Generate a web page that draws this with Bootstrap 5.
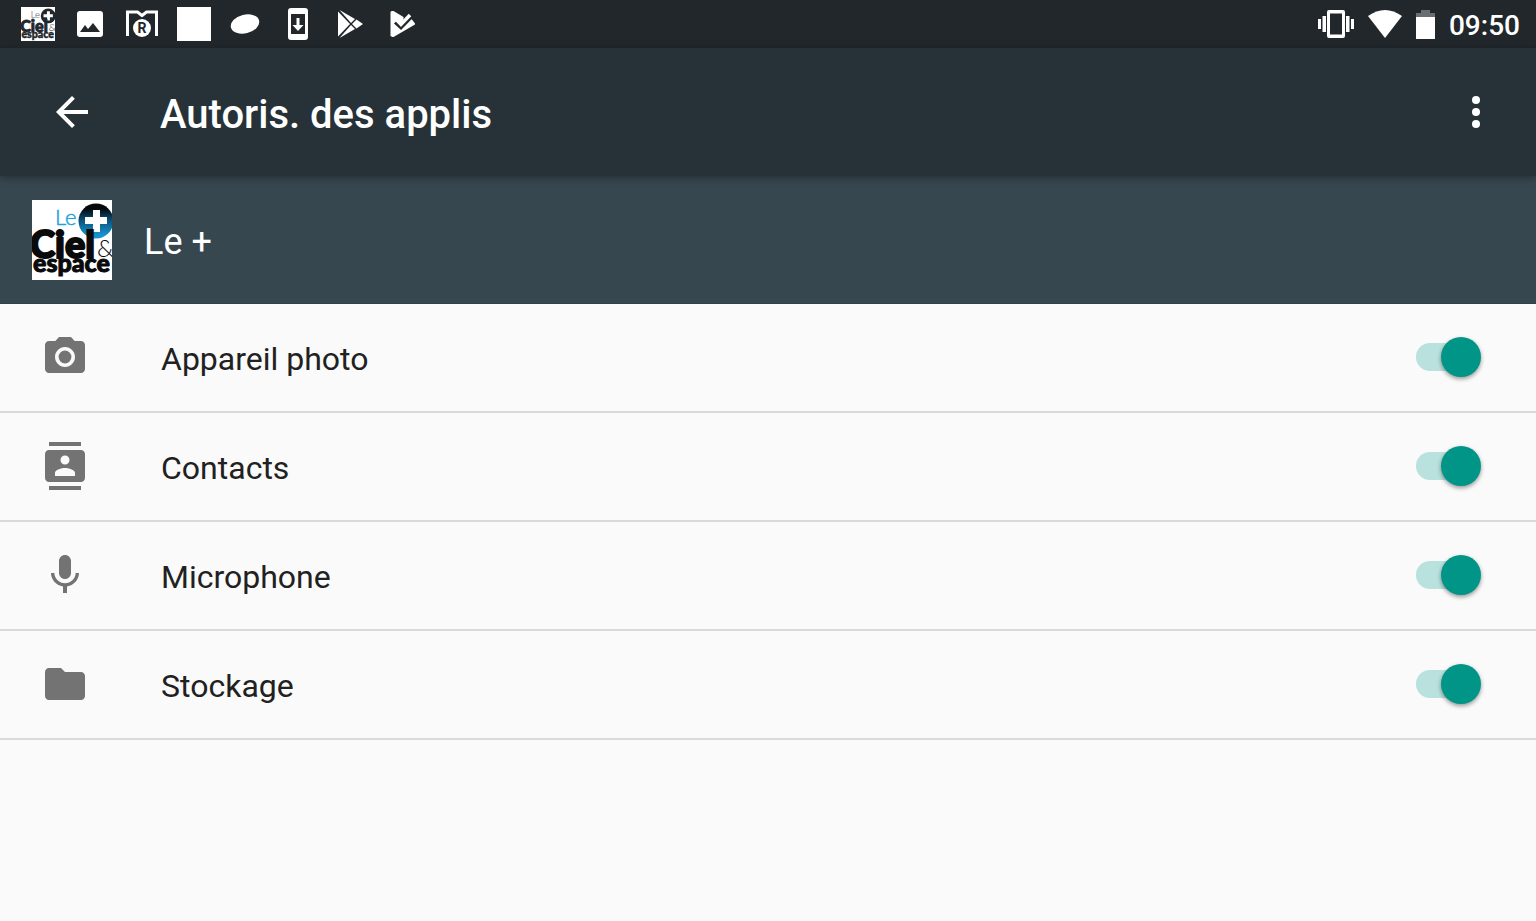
<!DOCTYPE html>
<html lang="fr">
<head>
<meta charset="utf-8">
<meta name="viewport" content="width=device-width, initial-scale=1">
<title>Autoris. des applis</title>
<link rel="stylesheet" href="https://cdn.jsdelivr.net/npm/bootstrap@5.3.0/dist/css/bootstrap.min.css">
<style>
  body { font-family: Roboto, "Noto Sans", sans-serif; background: #fafafa; color: #212121; }
  svg { display: block; flex: none; }
  .status-bar { height: 48px; background: #21272b; padding: 0 16px 0 21px; }
  .status-icons { gap: 18px; }
  .status-system { gap: 14px; }
  .status-time { font-size: 28px; font-weight: 500; line-height: 32px; padding-top: 3px; }
  .app-bar { height: 128px; background: #263238; padding: 0 36px 0 48px; box-shadow: 0 2px 8px rgba(0,0,0,.35); z-index: 1; }
  .app-title { font-size: 40px; font-weight: 500; line-height: 48px; margin-left: 64px; padding-top: 6px; }
  .icon-btn { width: 48px; height: 48px; }
  .app-info { height: 128px; background: #37474f; padding: 0 32px; gap: 32px; border-bottom: 1px solid #324148; }
  .app-name { font-size: 36px; line-height: 44px; padding-top: 5px; }
  .perm { height: 109px; padding: 0 55px 2px 41px; border-bottom: 2px solid #dadada; }
  .perm svg { color: #737373; }
  .perm label { font-size: 32px; line-height: 40px; margin-left: 72px; padding-top: 4px; }
  .toggle { appearance: none; width: 65px; height: 40px; margin: 0; position: relative; cursor: pointer; }
  .toggle::before { content: ""; position: absolute; inset: 6px 8px 6px 0; border-radius: 14px; background: #b9e1dd; }
  .toggle::after { content: ""; position: absolute; right: 0; top: 0; width: 40px; height: 40px; border-radius: 50%; background: #009587; box-shadow: 0 2px 4px rgba(0,0,0,.4); }
  .toggle:not(:checked)::before { background: #b9b9b9; }
  .toggle:not(:checked)::after { right: auto; left: 0; background: #f1f1f1; }
  .logo { --ink: #0a0a0a; --le: #1ba3dc; --disc: url(#discBlue); }
  .logo-mono { --ink: #21272b; --le: #8a8d90; --disc: #21272b; }
  .logo-word { font-family: Lato, sans-serif; font-weight: 900; fill: var(--ink); stroke: var(--ink); }
  .logo-thin { font-family: Lato, sans-serif; font-weight: 300; }
  .logo-le { fill: var(--le); stroke: var(--le); }
</style>
</head>
<body>

<svg width="0" height="0" class="position-absolute" aria-hidden="true">
  <defs>
    <linearGradient id="discBlue" x1="0" y1="0" x2="0" y2="1">
      <stop offset=".15" stop-color="#04090d"/><stop offset=".5" stop-color="#0b5580"/><stop offset=".9" stop-color="#1593cf"/>
    </linearGradient>
    <symbol id="brand" viewBox="0 0 80 80">
      <rect width="80" height="80" fill="#fff"/>
      <text class="logo-thin logo-le" x="23" y="25" font-size="22" stroke-width=".5">Le</text>
      <circle cx="64" cy="21" r="17.5" fill="var(--disc)"/>
      <path d="M61 10h7v7h7v7h-7v8h-7v-8h-8v-7h8z" fill="#fff"/>
      <text class="logo-word" x="-2" y="58" font-size="38" stroke-width="2">Ciel</text>
      <text class="logo-thin" x="65" y="57" font-size="24" fill="var(--ink)">&amp;</text>
      <text class="logo-word" x="1" y="72" font-size="25" stroke-width="1">espace</text>
    </symbol>
  </defs>
</svg>

<div class="status-bar d-flex align-items-center justify-content-between text-white">
  <div class="status-icons d-flex align-items-center">
    <svg class="logo-mono" width="34" height="34"><use href="#brand"/></svg>
    <svg width="34" height="34" fill="currentColor"><path fill-rule="evenodd" d="M7 4h20a3 3 0 0 1 3 3v20a3 3 0 0 1-3 3H7a3 3 0 0 1-3-3V7a3 3 0 0 1 3-3zM7 25h20l-7-9-5 6-3-4z"/></svg>
    <svg width="34" height="34"><path d="M2.500 29V5h10L17 8.500 21.500 5h10v24" fill="none" stroke="currentColor" stroke-width="3"/><circle cx="17" cy="21" r="10.500" fill="#21272b"/><circle cx="17" cy="21" r="9" fill="currentColor"/><text x="17" y="26" text-anchor="middle" font-size="14" font-weight="700" fill="#21272b">R</text></svg>
    <svg width="34" height="34"><rect width="34" height="34" fill="currentColor"/></svg>
    <svg width="34" height="34"><ellipse cx="16" cy="17" rx="14.500" ry="9.300" transform="rotate(-14 16 17)" fill="currentColor"/></svg>
    <svg width="34" height="34" fill="currentColor"><path fill-rule="evenodd" d="M10 1h14a3 3 0 0 1 3 3v26a3 3 0 0 1-3 3H10a3 3 0 0 1-3-3V4a3 3 0 0 1 3-3zM10 7v20h14V7z"/><path d="M15.500 11h3v7h4L17 24l-5.500-6h4z"/></svg>
    <svg width="34" height="34" fill="currentColor"><path d="M5 4.500 17 17 5 29.500zM6.500 3 22 12l-4 4zM6.500 31 22 22l-4-4zM23.500 12.500 30 17l-6.500 4.500L19 17z"/></svg>
    <svg width="34" height="34"><path d="M6.500 4h2l10 6v10l8-8 3.500 4.500v1L8.500 30h-1L5.500 29V5z" fill="currentColor"/><path d="m10 15.500 6 5.500 11-11.500" fill="none" stroke="#21272b" stroke-width="3"/><path d="m10.500 11.500 5.500 6 9-9.500" fill="none" stroke="currentColor" stroke-width="3.500"/></svg>
  </div>
  <div class="status-system d-flex align-items-center">
    <svg width="36" height="28" fill="currentColor"><path fill-rule="evenodd" d="M11 0h14a2 2 0 0 1 2 2v24a2 2 0 0 1-2 2H11a2 2 0 0 1-2-2V2a2 2 0 0 1 2-2zm1 3.500v21h12v-21zM0 9h3v10H0zM4.500 6H8v16H4.500zM28 6h3.500v16H28zM33 9h3v10h-3z"/></svg>
    <svg width="34" height="28" fill="currentColor"><path d="M0 6Q17-6 34 6L17 28z"/></svg>
    <svg width="19" height="29"><path d="M5 0h9v3h5v5H0V3h5z" fill="#6a6e71"/><path d="M0 7h19v22H0z" fill="currentColor"/></svg>
    <span class="status-time">09:50</span>
  </div>
</div>

<header class="app-bar d-flex align-items-center position-relative text-white">
  <button type="button" class="icon-btn btn p-0 border-0 text-white" aria-label="Retour"><svg width="48" height="48" viewBox="0 0 24 24" fill="currentColor"><path d="M20 11H7.830l5.590-5.590L12 4l-8 8 8 8 1.410-1.410L7.830 13H20v-2z"/></svg></button>
  <h1 class="app-title mb-0">Autoris. des applis</h1>
  <button type="button" class="icon-btn btn p-0 border-0 text-white ms-auto" aria-label="Plus d’options"><svg width="48" height="48" viewBox="0 0 24 24" fill="currentColor"><circle cx="12" cy="6" r="2"/><circle cx="12" cy="12" r="2"/><circle cx="12" cy="18" r="2"/></svg></button>
</header>

<section class="app-info d-flex align-items-center text-white">
  <svg class="logo" width="80" height="80" role="img" aria-label="Le + Ciel &amp; espace"><use href="#brand"/></svg>
  <div class="app-name">Le +</div>
</section>

<ul class="list-unstyled mb-0">
  <li class="perm d-flex align-items-center">
    <svg width="48" height="48" viewBox="0 0 24 24" fill="currentColor"><circle cx="12" cy="12" r="3.200"/><path d="M9 2 7.170 4H4c-1.100 0-2 .9-2 2v12c0 1.100.9 2 2 2h16c1.100 0 2-.9 2-2V6c0-1.100-.9-2-2-2h-3.170L15 2H9zm3 15c-2.760 0-5-2.240-5-5s2.240-5 5-5 5 2.240 5 5-2.240 5-5 5z"/></svg>
    <label for="p-camera" class="flex-grow-1">Appareil photo</label>
    <input class="toggle" type="checkbox" role="switch" id="p-camera" checked>
  </li>
  <li class="perm d-flex align-items-center">
    <svg width="48" height="48" viewBox="0 0 24 24" fill="currentColor"><path d="M20 0H4v2h16V0zM4 24h16v-2H4v2zM20 4H4c-1.100 0-2 .9-2 2v12c0 1.100.9 2 2 2h16c1.100 0 2-.9 2-2V6c0-1.100-.9-2-2-2zm-8 2.750a2.250 2.250 0 1 1 0 4.500 2.250 2.250 0 0 1 0-4.500zM17 17H7v-1.500c0-1.670 3.330-2.500 5-2.500s5 .83 5 2.500V17z"/></svg>
    <label for="p-contacts" class="flex-grow-1">Contacts</label>
    <input class="toggle" type="checkbox" role="switch" id="p-contacts" checked>
  </li>
  <li class="perm d-flex align-items-center">
    <svg width="48" height="48" viewBox="0 0 24 24" fill="currentColor"><path d="M12 14c1.660 0 3-1.340 3-3V5c0-1.660-1.340-3-3-3S9 3.340 9 5v6c0 1.660 1.340 3 3 3zm5.300-3c0 3-2.540 5.100-5.300 5.100S6.700 14 6.700 11H5c0 3.410 2.720 6.230 6 6.720V21h2v-3.280c3.280-.48 6-3.300 6-6.720h-1.700z"/></svg>
    <label for="p-mic" class="flex-grow-1">Microphone</label>
    <input class="toggle" type="checkbox" role="switch" id="p-mic" checked>
  </li>
  <li class="perm d-flex align-items-center">
    <svg width="48" height="48" viewBox="0 0 24 24" fill="currentColor"><path d="M10 4H4c-1.100 0-1.990.9-1.990 2L2 18c0 1.100.9 2 2 2h16c1.100 0 2-.9 2-2V8c0-1.100-.9-2-2-2h-8l-2-2z"/></svg>
    <label for="p-storage" class="flex-grow-1">Stockage</label>
    <input class="toggle" type="checkbox" role="switch" id="p-storage" checked>
  </li>
</ul>

<script src="https://cdn.jsdelivr.net/npm/bootstrap@5.3.0/dist/js/bootstrap.bundle.min.js"></script>
</body>
</html>
